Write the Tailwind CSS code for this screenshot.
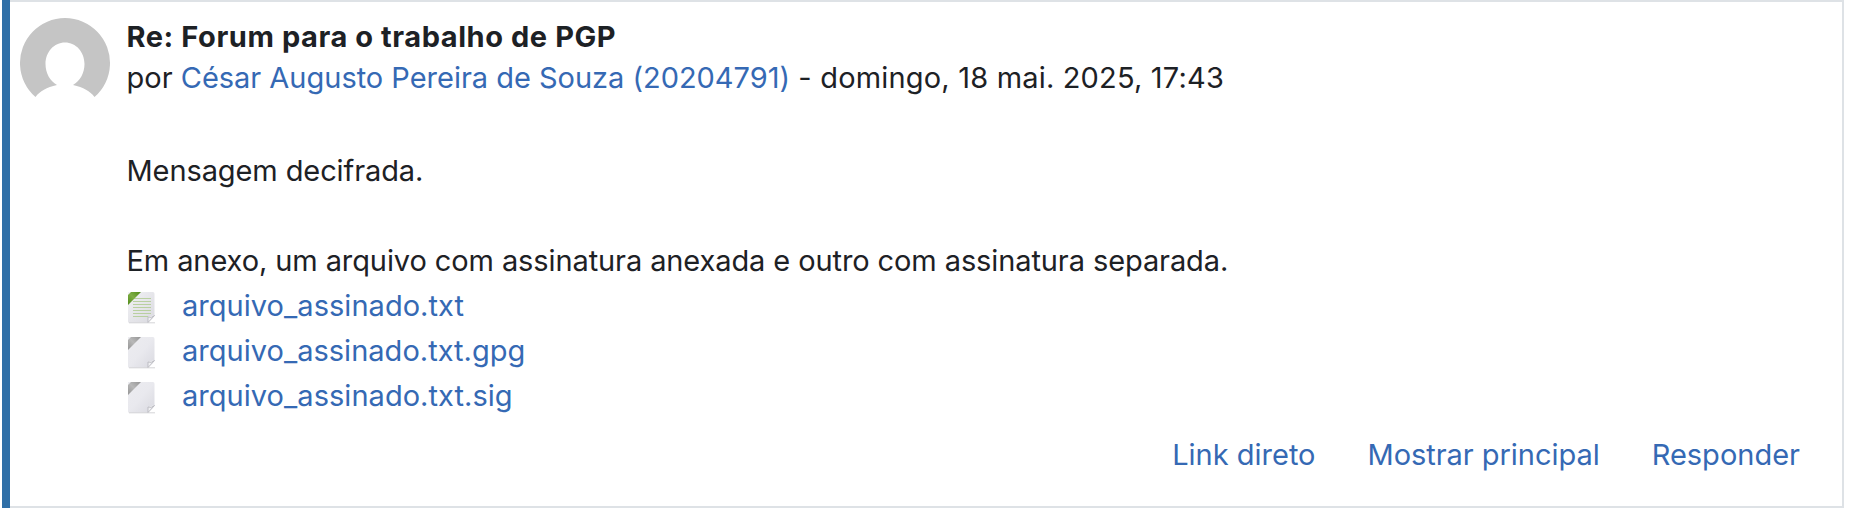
<!DOCTYPE html>
<html lang="pt">
<head>
<meta charset="utf-8">
<title>Fórum</title>
<script src="https://cdn.jsdelivr.net/npm/@tailwindcss/browser@4"></script>
</head>
<body class="bg-white font-['Inter',sans-serif] text-[29px] leading-[45px] text-[#1d2125] overflow-hidden">
<svg class="absolute size-0">
  <defs>
    <linearGradient id="paper" x1="0" y1="0" x2="1" y2="1"><stop offset="0" stop-color="#ececf0"/><stop offset=".5" stop-color="#e9e9ee"/><stop offset="1" stop-color="#d9d9e0"/></linearGradient>
    <linearGradient id="paperLight" x1="0" y1="0" x2="1" y2="1"><stop offset="0" stop-color="#f2f2f5"/><stop offset="1" stop-color="#dadae0"/></linearGradient>
    <linearGradient id="green" x1="0" y1="1" x2="1" y2="0"><stop offset="0" stop-color="#4f8a18"/><stop offset=".5" stop-color="#7fae45"/><stop offset="1" stop-color="#4f8a18"/></linearGradient>
    <linearGradient id="gray" x1="0" y1="1" x2="1" y2="0"><stop offset="0" stop-color="#949494"/><stop offset=".5" stop-color="#b8b8b8"/><stop offset="1" stop-color="#949494"/></linearGradient>
    <g id="fold"><path d="M20 30.500V25L26.500 23Q26 26 20 30.500Z" fill="#f0f0f3"/><path d="M20 30.500V25Q23 26.500 26.500 23.500L20 30.500" fill="none" stroke="#b4b4ba" stroke-width=".8"/><path d="M1 30.800H27" stroke="#c4c4c8" stroke-width="1" opacity=".7"/></g>
  </defs>
</svg>
<article class="flex h-[508px] w-[1842px] ml-[2px] border-y-2 border-r-2 border-y-[#dee2e6] border-r-[#dee2e6]">
  <div class="w-2 -my-[2px] bg-[#2f6fa7] shrink-0"></div>
  <svg class="ml-[10px] mt-4 size-[90px] shrink-0" viewBox="0 0 90 90"><path fill="#c5c5c5" fill-rule="evenodd" d="M15.500 79A45 45 0 1 1 74.500 79C70 73 63.500 69.500 53 67C60 63 64.500 55 64.500 46C64.500 34 56 24.500 45 24.500S25.500 34 25.500 46C25.500 55 30 63 37 67C26.500 69.500 20 73 15.500 79Z"/></svg>
  <div class="ml-[16.5px] flex flex-col grow pt-[14px]">
    <header class="leading-[41px]">
      <h3 class="font-bold"><span class="tracking-[0.57px]">Re: Forum para o trabalho de PGP</span></h3>
      <div class="whitespace-pre"><span>por </span><a class="text-[#3569b4] tracking-[-0.02px]">César Augusto Pereira de Souza (20204791)</a><span class="tracking-[0.18px]"> - domingo, 18 mai. 2025, 17:43</span></div>
    </header>
    <p class="mt-[50px]"><span class="tracking-[-0.1px]">Mensagem decifrada.</span></p>
    <p class="mt-[45px]"><span class="tracking-[-0.1px]">Em anexo, um arquivo com assinatura anexada e outro com assinatura separada.</span></p>
    <ul class="pl-[1.5px]">
      <li class="flex h-[45px]"><svg class="mt-[9px] w-7 h-8 mr-[26px]" viewBox="0 0 28 32"><path d="M0 0H25Q26.500 0 26.500 2V24L20 30.500H0Z" fill="url(#paperLight)"/><path d="M5 6.500H23M5 9.500H23M5 12.500H23M5 15.500H23M5 18.500H23M5 21.500H23M5 24.500H20" stroke="#b9d0a0" stroke-width="1.200"/><path d="M3 0H13L0 13V3Z" fill="url(#green)"/><use href="#fold"/></svg><a class="text-[#3569b4] tracking-[0.04px]">arquivo_assinado.txt</a></li>
      <li class="flex h-[45px]"><svg class="mt-[9px] w-7 h-8 mr-[26px]" viewBox="0 0 28 32"><path d="M0 0H25Q26.500 0 26.500 2V24L20 30.500H0Z" fill="url(#paper)"/><path d="M3 0H13L0 13V3Z" fill="url(#gray)"/><use href="#fold"/></svg><a class="text-[#3569b4] tracking-[0.02px]">arquivo_assinado.txt.gpg</a></li>
      <li class="flex h-[45px]"><svg class="mt-[9px] w-7 h-8 mr-[26px]" viewBox="0 0 28 32"><path d="M0 0H25Q26.500 0 26.500 2V24L20 30.500H0Z" fill="url(#paper)"/><path d="M3 0H13L0 13V3Z" fill="url(#gray)"/><use href="#fold"/></svg><a class="text-[#3569b4] tracking-[0.04px]">arquivo_assinado.txt.sig</a></li>
    </ul>
    <nav class="mt-[14px] mr-[42px] flex justify-end gap-[52px] text-[#3569b4]"><a>Link direto</a><a class="tracking-[-0.04px]">Mostrar principal</a><a>Responder</a></nav>
  </div>
</article>
</body>
</html>
